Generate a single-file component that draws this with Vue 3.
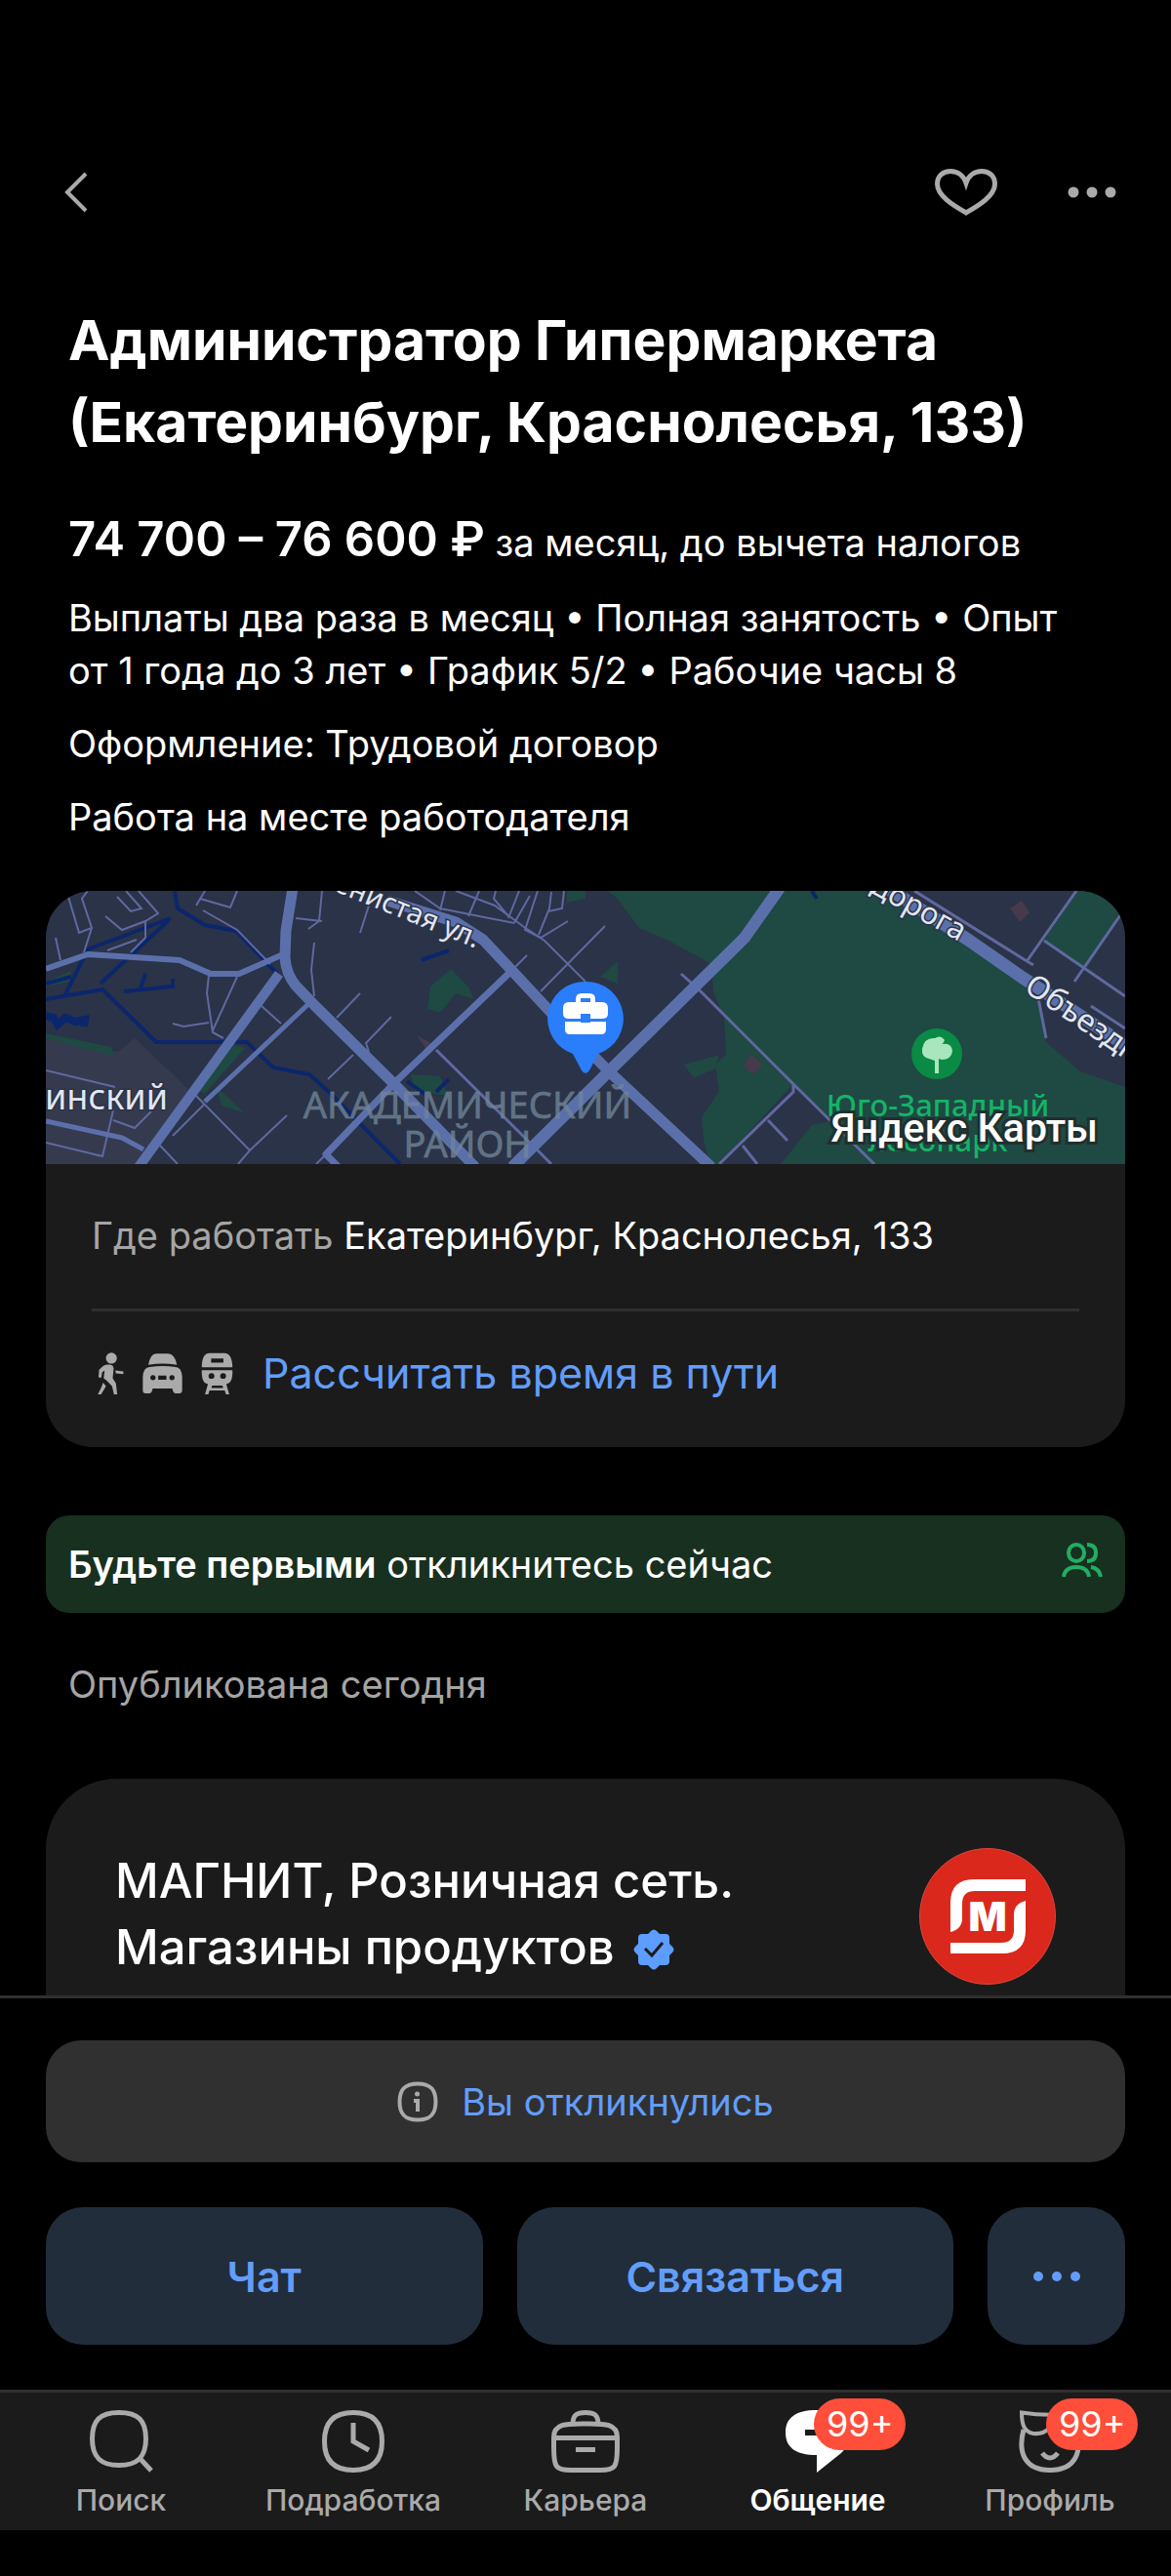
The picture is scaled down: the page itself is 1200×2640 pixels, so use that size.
<template>
  <div class="screen">
    <header class="top-bar">
      <button class="icon-button" aria-label="Назад">
        <svg width="24" height="42" viewBox="0 0 24 42" class="line-icon">
          <path d="M22 2L3 21L22 40" stroke-width="4" />
        </svg>
      </button>
      <div class="top-actions">
        <button class="icon-button" aria-label="В избранное">
          <svg width="64" height="48" viewBox="0 0 64 48" class="line-icon">
            <path
              d="M32 45C20 38 2.500 28 2.500 15.500C2.500 7 8.500 2.500 16 2.500C23.500 2.500 29.500 7 32 14.500C34.500 7 40.500 2.500 48 2.500C55.500 2.500 61.500 7 61.500 15.500C61.500 28 44 38 32 45Z"
              stroke-width="5"
            />
          </svg>
        </button>
        <button class="icon-button" aria-label="Ещё">
          <svg width="50" height="12" viewBox="0 0 50 12" fill="#aaaaaa">
            <circle cx="6" cy="6" r="5.500" />
            <circle cx="25" cy="6" r="5.500" />
            <circle cx="44" cy="6" r="5.500" />
          </svg>
        </button>
      </div>
    </header>

    <main class="content">
      <section class="summary">
        <h1>Администратор Гипермаркета (Екатеринбург, Краснолесья, 133)</h1>
        <p class="salary"><strong>74 700 – 76 600 ₽</strong> за месяц, до вычета налогов</p>
        <p v-for="line in details" :key="line" class="detail">{{ line }}</p>
      </section>

      <section class="place-card">
        <svg class="map" viewBox="0 0 1106 280" preserveAspectRatio="xMidYMid slice">
          <rect width="1106" height="280" fill="#2a3347" />
          <!-- кварталы и зелень -->
          <path d="M0 151L74 165L91 151L148 205L95 280H0Z" fill="#363a4e" />
          <path
            d="M575 0L586 8L608 38L638 51L682 75L684 103L695 131L697 168L686 178L690 205L672 232L674 255L680 280H1106V201L1060 185L1025 155L1016 111L1001 88L860 0Z"
            fill="#1f4943"
          />
          <path d="M1056 0H1092L1104 22L1066 80L1023 51Z" fill="#1f4943" />
          <path d="M766 198L690 280H753L785 240L805 236Z" fill="#2a3347" />
          <path
            d="M394 98L415 80L433 98L439 111L420 105L404 125L391 121ZM193 158L204 161L163 208L156 205ZM0 146L67 160L71 170L0 151ZM174 200L204 228L180 220ZM374 188L404 190L412 210L378 205ZM0 93L26 82L24 93L0 98ZM534 0H553V8L534 12ZM654 178L690 168L686 182L664 192ZM568 88L586 72L586 95ZM0 20L12 12L4 30Z"
            fill="#1f4943"
          />
          <path d="M380 148L398 158L392 165ZM988 18L1000 10L1008 22L998 32ZM715 180L722 167L735 178L724 188Z" fill="#473a4c" />
          <!-- ручьи -->
          <g class="water">
            <path d="M132 0L135 18L163 35L195 41L237 85M128 28L43 60L19 108M126 30L56 95M0 95L26 88" />
            <path d="M0 111L58 101L113 155H206L233 181L270 188L289 205L363 280" />
            <path d="M80 103L130 98V90M97 100L102 85M385 71L413 61M370 195L388 208M400 206L413 193M785 0L790 8" />
            <path d="M0 128L8 130L12 137L20 130L30 134L40 132L39 139" stroke-width="8" />
          </g>
          <!-- мелкие улицы -->
          <g class="lanes">
            <path d="M23 6L34 43L47 38L37 8L43 0M47 38L39 63M61 26L78 40L102 31L115 23L95 0M73 6L87 21L98 18L82 0M102 31V48L87 63M63 61L93 50M10 48L15 71" />
            <path d="M154 15L163 0M158 8L189 17L196 0M161 20L196 40L230 75M283 0L280 31L269 39M256 28L283 31M275 53L272 81L275 108M331 15L322 43" />
            <path d="M322 105L298 130M354 129L328 156L331 165M315 168L289 193M167 86L165 105L171 145L182 151M196 88L171 143M130 136L141 139L167 135M221 118L241 136" />
            <path d="M150 206L209 266L197 280M209 266L247 230M130 251L163 218M0 184L71 201M69 225L58 272L0 258M69 235L91 243L108 226M117 261L135 280M287 270L277 280" />
            <path d="M493 66L481 78M409 0L404 20M433 26L444 0M378 0L404 18L480 33M461 0L459 8L474 26M485 0L474 28M496 5L480 33M504 0L491 40L507 48L535 31M518 1L516 18L505 45M531 0L529 18L515 21" />
            <path d="M420 0L460 15L490 37L511 51L553 93M573 36L507 103" />
            <path d="M400 163L509 271L518 280M651 85L671 103L766 198L849 280M766 198V206L690 280M740 235L760 256M714 261L729 280" stroke-width="3" />
            <path d="M890 0L1002 70L1012 76M1056 0L1006 71M1023 51L1106 108M1101 25L1054 93M1071 118L1106 141M1017 110L1025 151" stroke-width="3" />
          </g>
          <!-- магистрали -->
          <g class="roads">
            <path d="M0 80L43 65L137 71L169 85H198L241 66" stroke-width="6" />
            <path d="M0 236L78 253L100 265M269 116L163 216" stroke-width="5" />
            <path d="M474 85L359 195L287 270L300 283" stroke-width="7" />
            <path d="M239 85L95 283" stroke-width="10" />
            <path d="M253 -3L246 41L245 68Q246 85 256 97L276 118L357 198L440 283" stroke-width="11" />
            <path d="M350 10L420 32L448 50L518 125L577 185L682 283" stroke-width="11" />
            <path d="M752 -3L716 48L577 185L478 283" stroke-width="12" />
            <path d="M862 -3L945 50L1001 89L1109 160" stroke-width="13" />
          </g>
          <!-- подписи -->
          <g class="map-labels">
            <text x="280" y="-6" font-size="29" transform="rotate(22 280 -6)">Тенистая ул.</text>
            <text x="844" y="1" font-size="31" transform="rotate(29 844 1)">дорога</text>
            <text x="1001" y="102" font-size="32" transform="rotate(34 1001 102)">Объездная</text>
            <text x="125" y="224" font-size="36" text-anchor="end">Мичуринский</text>
          </g>
          <g class="district" text-anchor="middle">
            <text x="432" y="233" font-size="38">АКАДЕМИЧЕСКИЙ</text>
            <text x="432" y="273" font-size="38">РАЙОН</text>
          </g>
          <circle cx="913" cy="167" r="26" fill="#0a8a45" />
          <path
            d="M911 187V174L905 172Q897 170 898 162Q900 150 911 151Q917 147 921 153Q920 156 918 157Q928 155 929 164Q928 173 918 173L915 172V187Z"
            fill="#a9e6bd"
          />
          <g class="park" text-anchor="middle">
            <text x="914" y="231" font-size="31">Юго-Западный</text>
            <text x="914" y="267" font-size="31">лесопарк</text>
          </g>
          <path
            d="M553 93A38 38 0 0 0 540 167L549 184Q553 190 557 184L566 167A38 38 0 0 0 553 93Z"
            fill="#2a7dfb"
          />
          <path
            d="M543 114V111Q543 105 549 105H557Q563 105 563 111V114H570Q576 114 576 120V126Q576 131 570 131H558V126H548V131H536Q530 131 530 126V120Q530 114 536 114ZM548 114H558V110H548ZM532 134H548V135H558V134H574V142Q574 147 569 147H537Q532 147 532 142Z"
            fill="#ffffff"
          />
          <text class="map-brand" x="1078" y="257" font-size="41" text-anchor="end">Яндекс Карты</text>
        </svg>
        <div class="place-body">
          <p class="address"><span>Где работать</span> Екатеринбург, Краснолесья, 133</p>
          <hr />
          <a href="#route" class="route">
            <span class="transport">
              <svg width="27" height="43" viewBox="34 44 80 130">
                <circle cx="76" cy="62" r="17" />
                <path d="M50 86Q60 80 72 82Q82 84 83 94L80 124L90 140L94 174H84L78 148L60 130L52 124L55 100L47 106L45 122H36L38 98ZM88 100L113 103V111L90 109ZM50 138L59 148L56 154L44 174H34L45 152Z" />
              </svg>
              <svg width="41" height="43" viewBox="176 46 122 128">
                <path d="M194 84Q200 50 218 50H254Q274 50 281 84Q237 76 194 84Z" />
                <path fill-rule="evenodd" d="M177 120Q179 92 198 91Q237 85 277 91Q295 92 297 120V162Q297 171 288 171H278Q269 171 267 156H207Q205 171 196 171H186Q177 171 177 162ZM208 115A8 8 0 1 0 208 131A8 8 0 1 0 208 115ZM266 115A8 8 0 1 0 266 131A8 8 0 1 0 266 115ZM224 117V129H249V117Z" />
              </svg>
              <svg width="33" height="43" viewBox="350 44 99 130">
                <path fill-rule="evenodd" d="M352 90Q352 46 376 46H422Q446 46 447 90ZM381 63V76H419V63Z" />
                <path fill-rule="evenodd" d="M352 99H447V112Q445 140 428 142L437 174H427L423 162H376L372 174H362L371 142Q354 140 352 112ZM382 108A9 9 0 1 0 382 126A9 9 0 1 0 382 108ZM418 108A9 9 0 1 0 418 126A9 9 0 1 0 418 108ZM384 147L382 154H418L416 147Z" />
              </svg>
            </span>
            Рассчитать время в пути
          </a>
        </div>
      </section>

      <section class="banner">
        <p><strong>Будьте первыми</strong> откликнитесь сейчас</p>
        <svg width="42" height="36" viewBox="0 0 42 36" class="people">
          <rect x="7" y="2" width="16" height="17" rx="8" />
          <path d="M26 2C32 2 35 5 35 10.500S32 19 26 19M2 35C3 28 8 25 15 25S27 28 28 35M30 25C36 26 39 29 40 35" />
        </svg>
      </section>

      <p class="published">Опубликована сегодня</p>

      <section class="company">
        <h2>
          МАГНИТ, Розничная сеть. Магазины&nbsp;продуктов
          <svg class="verified" width="42" height="42" viewBox="0 0 42 42">
            <path
              d="M18 2Q21 -1 24 2L27 5H33Q37 5 37 9V15L40 18Q43 21 40 24L37 27V33Q37 37 33 37H27L24 40Q21 43 18 40L15 37H9Q5 37 5 33V27L2 24Q-1 21 2 18L5 15V9Q5 5 9 5H15Z"
              fill="#5c9dff"
            />
            <path d="M12 20L19 27L30 14" fill="none" stroke="#1b1b1b" stroke-width="3" />
          </svg>
        </h2>
        <svg class="logo" width="140" height="140" viewBox="0 0 140 140">
          <circle cx="70" cy="70" r="69.500" fill="#da291c" stroke="#d9473b" />
          <path
            d="M109 32H56Q32 32 32 56V86Q44 83 44 72V57Q44 44 57 44H109ZM32 108H85Q109 108 109 84V54Q97 57 97 68V84Q97 97 84 97H32Z"
            fill="#ffffff"
          />
          <text x="70" y="85" font-size="41" font-weight="900" text-anchor="middle" fill="#ffffff">М</text>
        </svg>
      </section>
    </main>

    <footer>
      <div class="reply-panel">
        <button class="replied">
          <svg width="42" height="42" viewBox="0 0 42 42" class="line-icon">
            <path d="M21 2.500C34 2.500 39.500 8 39.500 21S34 39.500 21 39.500 2.500 34 2.500 21 8 2.500 21 2.500Z" stroke-width="4" />
            <path d="M17 20H21V31" stroke-width="4" />
            <circle cx="20.500" cy="13" r="2.500" fill="#aaaaaa" stroke="none" />
          </svg>
          Вы откликнулись
        </button>
        <div class="reply-actions">
          <button class="action wide">Чат</button>
          <button class="action wide">Связаться</button>
          <button class="action more" aria-label="Другие действия">
            <svg width="50" height="12" viewBox="0 0 50 12" fill="#629dfa">
              <circle cx="6" cy="6" r="5" />
              <circle cx="25" cy="6" r="5" />
              <circle cx="44" cy="6" r="5" />
            </svg>
          </button>
        </div>
      </div>

      <nav class="tab-bar">
        <a v-for="tab in tabs" :key="tab.id" :href="'#' + tab.id" class="tab" :class="{ active: tab.active }">
          <span class="tab-icon">
            <svg v-if="tab.id === 'search'" width="66" height="64" viewBox="0 0 66 64" class="line-icon">
              <path d="M31 2.500C51 2.500 58.500 11 58.500 29.500S50 56.500 31 56.500 3.500 48 3.500 29.500 11 2.500 31 2.500ZM51 48L64 62" stroke-width="5" />
            </svg>
            <svg v-else-if="tab.id === 'parttime'" width="66" height="64" viewBox="0 0 66 64" class="line-icon">
              <path d="M33 2.500C53 2.500 62.500 13 62.500 32S53 61.500 33 61.500 3.500 51 3.500 32 13 2.500 33 2.500Z" stroke-width="5" />
              <path d="M33 13V32L49 41" stroke-width="5" />
            </svg>
            <svg v-else-if="tab.id === 'career'" width="70" height="64" viewBox="0 0 70 64" class="line-icon">
              <path d="M35 14C53 14 67.500 13 67.500 28V38C67.500 58 66 61.500 50 61.500H20C4 61.500 2.500 58 2.500 38V28C2.500 13 17 14 35 14ZM3 28.500H67M25 40.500H45" stroke-width="5" />
              <path d="M22 14C22 5 26 2.500 35 2.500S48 5 48 14" stroke-width="5" />
            </svg>
            <svg v-else-if="tab.id === 'chats'" width="66" height="64" viewBox="0 0 66 64">
              <path d="M32 0H38C56 0 66 8 66 23C66 31 63 38 57 44L32 64V46C10 46 0 38 0 23S10 0 32 0Z" fill="#ffffff" />
              <path d="M20 23H46" stroke="#1b1b1b" stroke-width="6" />
            </svg>
            <svg v-else width="66" height="64" viewBox="0 0 66 64" class="line-icon">
              <path d="M4 2.500Q33 7 62 2.500C62 16 60 24 50 24Q40 25 33 18Q26 25 16 24C6 22 4 14 4 2.500Z" stroke-width="4" />
              <path d="M6 20C0 42 6 61.500 33 61.500S66 42 60 20M25 44Q33 54 41 44" stroke-width="5" />
            </svg>
            <span v-if="tab.badge" class="badge">{{ tab.badge }}</span>
          </span>
          {{ tab.label }}
        </a>
      </nav>
    </footer>
  </div>
</template>

<script setup>
const details = [
  'Выплаты два раза в месяц • Полная занятость • Опыт от 1 года до 3 лет • График 5/2 • Рабочие часы 8',
  'Оформление: Трудовой договор',
  'Работа на месте работодателя'
]

const tabs = [
  { id: 'search', label: 'Поиск' },
  { id: 'parttime', label: 'Подработка' },
  { id: 'career', label: 'Карьера' },
  { id: 'chats', label: 'Общение', badge: '99+', active: true },
  { id: 'profile', label: 'Профиль', badge: '99+' }
]
</script>

<style>
body {
  margin: 0;
  background: #000000;
}
</style>

<style scoped>
.screen {
  display: flex;
  flex-direction: column;
  height: 100vh;
  color: #ffffff;
  font-family: Inter, "Noto Sans", sans-serif;
  font-size: 38px;
  line-height: 54px;
}

h1,
h2,
p {
  margin: 0;
}

svg {
  display: block;
  flex: none;
}

button {
  border: none;
  padding: 0;
  background: none;
  color: inherit;
  font: inherit;
  cursor: pointer;
}

a {
  color: inherit;
  text-decoration: none;
}

.line-icon {
  fill: none;
  stroke: #aaaaaa;
}

.top-bar {
  display: flex;
  justify-content: space-between;
  align-items: center;
  padding: 137px 56px 0 66px;
  height: 120px;
  flex: none;
}

.top-actions {
  display: flex;
  align-items: center;
  gap: 72px;
}

.content {
  display: flex;
  flex-direction: column;
  flex: 1;
  min-height: 0;
  padding: 50px 47px 0;
  overflow: hidden;
}

.summary {
  padding: 0 23px;
}

h1 {
  margin-bottom: 49px;
  font-size: 57px;
  font-weight: 700;
  line-height: 84px;
}

.salary {
  line-height: 58px;
}

.salary strong {
  font-size: 49px;
  font-weight: 600;
}

.detail {
  margin-top: 21px;
}

.place-card {
  flex: none;
  margin-top: 49px;
  border-radius: 48px;
  background: #1b1b1b;
  overflow: hidden;
}

.map {
  width: 100%;
  height: 280px;
  font-family: "Noto Sans", sans-serif;
}

.water {
  fill: none;
  stroke: #0b266c;
  stroke-width: 4;
}

.lanes {
  fill: none;
  stroke: #6068a0;
  stroke-width: 2;
}

.roads {
  fill: none;
  stroke: #5b70ab;
  stroke-linejoin: round;
}

.map-labels {
  fill: #e2e6f2;
  stroke: #2a3347;
  stroke-width: 3px;
  paint-order: stroke;
}

.district {
  fill: #72869a;
  fill-opacity: 0.75;
  stroke: #72869a;
  stroke-opacity: 0.5;
}

.park {
  fill: #14b368;
  font-weight: 500;
}

.map-brand {
  fill: #ffffff;
  stroke: #20302f;
  stroke-width: 6px;
  paint-order: stroke;
  font-family: Roboto, sans-serif;
  font-weight: 500;
}

.place-body {
  padding: 46px 47px;
}

.address span {
  color: #a5a5a5;
}

hr {
  margin: 48px 0 33px;
  border: none;
  border-top: 3px solid #303030;
}

.route {
  display: flex;
  align-items: center;
  gap: 30px;
  padding-left: 6px;
  color: #629dfa;
  font-size: 43px;
  line-height: 60px;
}

.transport {
  display: flex;
  gap: 19px;
  fill: #aaaaaa;
}

.banner {
  display: flex;
  justify-content: space-between;
  flex: none;
  margin-top: 70px;
  padding: 23px;
  border-radius: 24px;
  background: #18301f;
}

.banner strong {
  font-weight: 600;
}

.people {
  margin-top: 5px;
  fill: none;
  stroke: #1fae63;
  stroke-width: 4;
}

.published {
  margin-top: 46px;
  padding: 0 23px;
  color: #a5a5a5;
}

.company {
  display: flex;
  justify-content: space-between;
  flex: 1;
  margin-top: 70px;
  padding: 71px 71px 0;
  border-radius: 72px 72px 0 0;
  background: #1b1b1b;
}

h2 {
  max-width: 720px;
  font-size: 49px;
  font-weight: 500;
  line-height: 68px;
}

.verified {
  display: inline-block;
  margin-left: 6px;
  vertical-align: -6px;
}

footer {
  flex: none;
  padding-bottom: 47px;
  border-top: 3px solid #303030;
}

.reply-panel {
  padding: 43px 47px 46px;
}

.replied {
  display: flex;
  justify-content: center;
  align-items: center;
  gap: 24px;
  width: 100%;
  height: 125px;
  border-radius: 36px;
  background: #303030;
  color: #629dfa;
}

.reply-actions {
  display: flex;
  gap: 35px;
  margin-top: 46px;
}

.action {
  display: flex;
  justify-content: center;
  align-items: center;
  height: 141px;
  border-radius: 38px;
  background: #222d3b;
  color: #629dfa;
  font-size: 43px;
  font-weight: 600;
}

.wide {
  flex: 1;
}

.more {
  width: 141px;
}

.tab-bar {
  display: grid;
  grid-template-columns: repeat(5, 1fr);
  padding: 18px 5px 13px;
  border-top: 3px solid #303030;
  background: #1b1b1b;
  color: #aaaaaa;
  font-size: 30px;
  font-weight: 500;
  line-height: 36px;
}

.tab {
  display: flex;
  flex-direction: column;
  align-items: center;
  gap: 10px;
}

.active {
  color: #ffffff;
  font-weight: 600;
}

.tab-icon {
  position: relative;
}

.badge {
  position: absolute;
  top: -12px;
  left: 29px;
  padding: 0 13px;
  border-radius: 27px;
  background: #ff4e3a;
  color: #ffffff;
  font-size: 36px;
  font-weight: 400;
  line-height: 53px;
}
</style>
